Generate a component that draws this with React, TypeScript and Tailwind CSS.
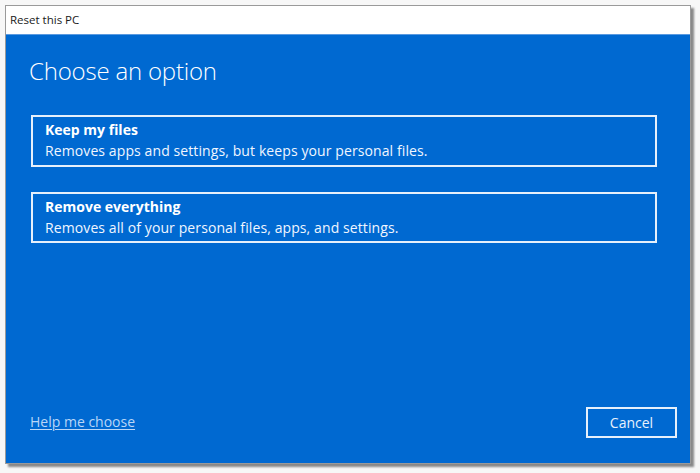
import React from "react";

export default function App() {
  const font = { fontFamily: '"Open Sans", "Noto Sans", sans-serif' };
  return (
    <div className="w-[700px] h-[473px] bg-[#f7f7f7] overflow-hidden" style={font}>
      <div className="ml-[5px] mt-[5px] w-[686px] h-[459px] border border-[#9a9a9a] bg-white shadow-[3px_3px_2px_rgba(0,0,0,0.45)] flex flex-col">
        <div className="h-[29px] bg-white flex items-center pl-[4px] text-[11.5px] text-[#1a1a1a] border-b border-[#5a9ae0]">
          Reset this PC
        </div>
        <div className="flex-1 bg-[#0069d1] flex flex-col text-white">
          <div className="pl-[23px] pt-[21px] text-[24px] font-light leading-[30px] tracking-[-0.2px]">
            Choose an option
          </div>
          <div className="ml-[25px] mr-[33px] mt-[29px] flex flex-col gap-[25px]">
            <div className="h-[52px] border-2 border-[#e6f0fb] pl-[12px] pt-[3px] flex flex-col">
              <div className="text-[14px] font-bold leading-[20px]">Keep my files</div>
              <div className="text-[14px] leading-[21px] tracking-[0.1px] text-[#f0f6ff]">
                Removes apps and settings, but keeps your personal files.
              </div>
            </div>
            <div className="h-[51px] border-2 border-[#e6f0fb] pl-[12px] pt-[3px] flex flex-col">
              <div className="text-[14px] font-bold leading-[20px]">Remove everything</div>
              <div className="text-[14px] leading-[21px] tracking-[0.1px] text-[#f0f6ff]">
                Removes all of your personal files, apps, and settings.
              </div>
            </div>
          </div>
          <div className="mt-auto mb-[25px] ml-[24px] mr-[13px] flex items-end justify-between">
            <a className="text-[14px] text-[#b9d6f7] underline underline-offset-2 mb-[6px] cursor-pointer">
              Help me choose
            </a>
            <button className="w-[91px] h-[31px] border-2 border-[#e6f0fb] text-[14px] text-[#e8f1fc] flex items-center justify-center">
              Cancel
            </button>
          </div>
        </div>
      </div>
    </div>
  );
}
